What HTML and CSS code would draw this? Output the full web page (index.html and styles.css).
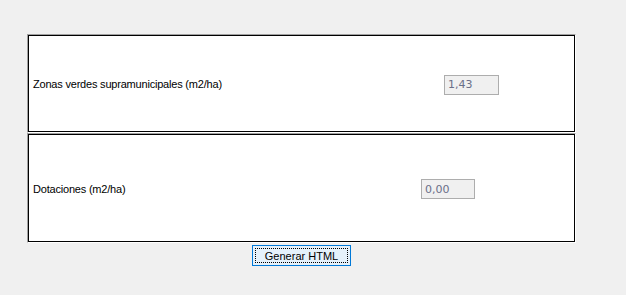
FILE: index.html
```html
<!DOCTYPE html>
<html lang="es">
<head>
<meta charset="utf-8">
<title>Generar HTML</title>
<link rel="stylesheet" href="styles.css">
</head>
<body>
<main class="form">
  <section class="panel panel-top">
    <div class="row">
      <span class="label">Zonas verdes supramunicipales (m2/ha)</span>
      <input class="value value-a" type="text" value="1,43" disabled>
    </div>
  </section>
  <section class="panel panel-bottom">
    <div class="row">
      <span class="label">Dotaciones (m2/ha)</span>
      <input class="value value-b" type="text" value="0,00" disabled>
    </div>
  </section>
  <div class="actions">
    <button class="btn" type="button"><span class="btn-focus">Generar HTML</span></button>
  </div>
</main>
</body>
</html>
```
FILE: styles.css
```css
html, body {
  margin: 0;
  padding: 0;
  background: #f0f0f0;
}

body {
  font-family: "Liberation Sans", Arial, sans-serif;
  font-size: 11px;
  color: #000;
}

.form {
  width: 549px;
  padding: 34px 0 0 27px;
  display: flex;
  flex-direction: column;
}

.panel {
  box-sizing: border-box;
  width: 549px;
  background: #fff;
  border: 1px solid;
  border-color: #a0a0a0 #ffffff #ffffff #a0a0a0;
  box-shadow: inset 0 0 0 1px #000;
  display: flex;
  align-items: center;
  padding: 0 4px 0 5px;
}

.panel-top {
  height: 99px;
}

.panel-bottom {
  height: 110px;
}

.row {
  display: flex;
  align-items: center;
  width: 100%;
}

.label {
  white-space: nowrap;
  margin-top: 1px;
  letter-spacing: -0.2px;
}

.value {
  box-sizing: border-box;
  height: 20px;
  margin-left: auto;
  border: 1px solid #adadad;
  background: #f0f0f0;
  color: #6d6d6d;
  font-family: "DejaVu Sans", Verdana, sans-serif;
  font-size: 11px;
  padding: 0 3px;
  margin-top: 2px;
  -webkit-text-fill-color: #6a6f88;
  opacity: 1;
}

.value-a {
  width: 55px;
  margin-right: 72px;
}

.value-b {
  width: 54px;
  margin-right: 96px;
}

.actions {
  display: flex;
  justify-content: center;
  padding-top: 2px;
}

.btn {
  box-sizing: border-box;
  width: 99px;
  height: 21px;
  padding: 2px;
  border: 1px solid #0078d7;
  background: #e5f1fb;
  font-family: "Liberation Sans", Arial, sans-serif;
  font-size: 11px;
  color: #000;
  display: flex;
}

.btn-focus {
  flex: 1;
  display: flex;
  align-items: center;
  justify-content: center;
  border: 1px dotted #000;
}
```
